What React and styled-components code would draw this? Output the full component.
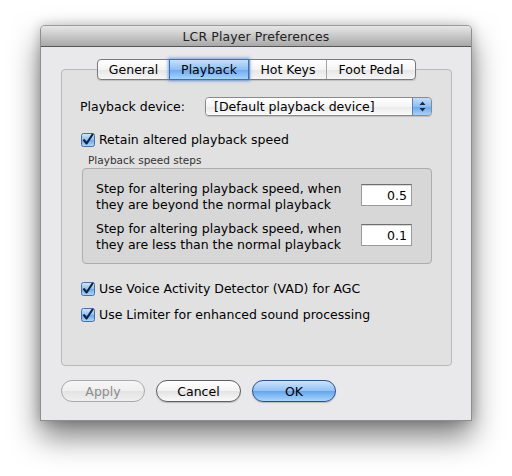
import React from "react";
import styled, { createGlobalStyle, css } from "styled-components";

const Global = createGlobalStyle`
  html, body { margin: 0; padding: 0; background: #ffffff; }
  body { font-family: "DejaVu Sans", "Noto Sans", sans-serif; font-size: 12px; color: #000; }
  * { box-sizing: border-box; }
`;

const Page = styled.div`
  width: 512px;
  height: 476px;
  padding: 25px 0 0 40px;
`;

const Window = styled.div`
  width: 432px;
  height: 396px;
  background: #e9e8ea;
  border: 1px solid #8e8e8e;
  border-top-color: #9a9a9a;
  border-radius: 5px 5px 0 0;
  box-shadow: 0 16px 30px rgba(0, 0, 0, 0.5), 0 0 12px rgba(0, 0, 0, 0.22);
  display: flex;
  flex-direction: column;
`;

const TitleBar = styled.div`
  height: 21px;
  flex: none;
  border-radius: 4px 4px 0 0;
  background: linear-gradient(#e7e7e7, #c8c8c8 50%, #a8a8a8);
  border-bottom: 1px solid #565656;
  display: flex;
  align-items: center;
  justify-content: center;
  font-size: 12.5px;
  color: #222;
  letter-spacing: 0.1px;
`;

const Body = styled.div`
  flex: 1;
  display: flex;
  flex-direction: column;
  padding: 12px 19px 0 20px;
`;

const TabStrip = styled.div`
  display: flex;
  justify-content: center;
  margin-bottom: -11px;
  position: relative;
  z-index: 1;
`;

const Segments = styled.div`
  display: flex;
  height: 21px;
  border: 1px solid #7a7a7a;
  border-radius: 4px;
  background: linear-gradient(#ffffff, #f4f4f4 50%, #e6e6e6 51%, #f6f6f6);
  box-shadow: 0 1px 1px rgba(0, 0, 0, 0.15);
`;

const Tab = styled.div`
  width: ${(p) => p.$w}px;
  display: flex;
  align-items: center;
  justify-content: center;
  font-size: 12.5px;
  border-left: 1px solid #a6a6a6;
  &:first-child { border-left: none; border-radius: 3px 0 0 3px; }
  &:last-child { border-radius: 0 3px 3px 0; }
  ${(p) =>
    p.$active &&
    css`
      background: linear-gradient(#c6e0fb, #8ec0f5 50%, #6ba9ee 51%, #a8d4fb);
      border: 1px solid #3f6fb7;
      margin: -1px 0;
      box-shadow: 0 0 3px 1px rgba(80, 140, 220, 0.75);
      position: relative;
      z-index: 1;
    `}
`;

const GroupBox = styled.div`
  height: 297px;
  background: #e1e1e2;
  border: 1px solid #b9b9b9;
  border-radius: 4px;
  padding: 27px 19px 0 18px;
  display: flex;
  flex-direction: column;
`;

const DeviceRow = styled.div`
  display: flex;
  align-items: center;
  justify-content: space-between;
  height: 19px;
`;

const Label = styled.span`
  font-size: 12.5px;
`;

const Popup = styled.div`
  width: 227px;
  height: 19px;
  border: 1px solid #8a8a8a;
  border-radius: 4px;
  display: flex;
  overflow: hidden;
  box-shadow: 0 1px 1px rgba(0, 0, 0, 0.15);
`;

const PopupText = styled.div`
  flex: 1;
  padding-left: 8px;
  display: flex;
  align-items: center;
  font-size: 12.5px;
  background: linear-gradient(#ffffff, #f5f5f5 50%, #e9e9e9 51%, #fbfbfb);
`;

const PopupArrows = styled.div`
  width: 19px;
  display: flex;
  align-items: center;
  justify-content: center;
  border-left: 1px solid #5b7fb5;
  background: linear-gradient(#c4defa, #8dbef3 50%, #6aa7ec 51%, #a5d2fb);
`;

const CheckRow = styled.div`
  display: flex;
  align-items: center;
  gap: 4px;
  margin-top: ${(p) => p.$mt}px;
  margin-left: 1px;
  font-size: 12.5px;
`;

const SmallLabel = styled.div`
  font-size: 10.5px;
  color: #333;
  margin: 7px 0 0 8px;
  height: 14px;
`;

const InnerBox = styled.div`
  margin: 0 0 0 2px;
  height: 96px;
  background: #d7d7d8;
  border: 1px solid #adadad;
  border-radius: 4px;
  padding: 12px 19px 0 13px;
  display: flex;
  flex-direction: column;
  gap: 8px;
`;

const StepRow = styled.div`
  display: flex;
  justify-content: space-between;
  align-items: flex-start;
`;

const StepText = styled.div`
  font-size: 12.5px;
  line-height: 16px;
`;

const NumField = styled.div`
  width: 51px;
  height: 22px;
  margin-top: 3px;
  background: #fff;
  border: 1px solid #9a9a9a;
  border-top-color: #6f6f6f;
  box-shadow: inset 0 1px 0 #d8d8d8;
  display: flex;
  align-items: center;
  justify-content: flex-end;
  padding-right: 4px;
  font-size: 12.5px;
`;

const ButtonRow = styled.div`
  display: flex;
  gap: 11px;
  padding: 14px 0 0 0;
`;

const Button = styled.div`
  width: ${(p) => p.$w}px;
  height: 22px;
  border-radius: 11px;
  display: flex;
  align-items: center;
  justify-content: center;
  font-size: 12.5px;
  border: 1px solid #5e5e5e;
  background: linear-gradient(#ffffff, #f3f3f3 50%, #e2e2e2 51%, #fafafa);
  box-shadow: 0 1px 1px rgba(0, 0, 0, 0.2);
  ${(p) =>
    p.$disabled &&
    css`
      color: #8c8c8c;
      border-color: #a9a9a9;
      background: linear-gradient(#f6f6f6, #efefef 50%, #e3e3e3 51%, #f0f0f0);
      box-shadow: none;
    `}
  ${(p) =>
    p.$primary &&
    css`
      border-color: #2d4f8f;
      background: linear-gradient(#cbe3fc, #92c2f5 50%, #65a4ec 51%, #a9d6fc);
    `}
`;

const CheckBox = () => (
  <svg width="14" height="14" viewBox="0 0 14 14">
    <defs>
      <linearGradient id="cbg" x1="0" y1="0" x2="0" y2="1">
        <stop offset="0" stopColor="#d3e7fb" />
        <stop offset="0.5" stopColor="#8fbff2" />
        <stop offset="0.51" stopColor="#6aa6ea" />
        <stop offset="1" stopColor="#b3dafc" />
      </linearGradient>
    </defs>
    <rect x="0.5" y="0.5" width="13" height="13" rx="2" fill="url(#cbg)" stroke="#4a6ea6" />
    <path d="M3 7.2 L5.6 10.5 L11.5 1.5" fill="none" stroke="#10213d" strokeWidth="2.1" strokeLinecap="round" strokeLinejoin="round" />
  </svg>
);

const Arrows = () => (
  <svg width="7" height="11" viewBox="0 0 7 11">
    <path d="M3.5 0.5 L6.5 4 L0.5 4 Z" fill="#1b2a40" />
    <path d="M3.5 10.5 L6.5 7 L0.5 7 Z" fill="#1b2a40" />
  </svg>
);

export default function App() {
  return (
    <>
      <Global />
      <Page>
        <Window>
          <TitleBar>LCR Player Preferences</TitleBar>
          <Body>
            <TabStrip>
              <Segments>
                <Tab $w={71}>General</Tab>
                <Tab $w={80} $active>Playback</Tab>
                <Tab $w={77}>Hot Keys</Tab>
                <Tab $w={89}>Foot Pedal</Tab>
              </Segments>
            </TabStrip>
            <GroupBox>
              <DeviceRow>
                <Label>Playback device:</Label>
                <Popup>
                  <PopupText>[Default playback device]</PopupText>
                  <PopupArrows>
                    <Arrows />
                  </PopupArrows>
                </Popup>
              </DeviceRow>
              <CheckRow $mt={16}>
                <CheckBox />
                <span>Retain altered playback speed</span>
              </CheckRow>
              <SmallLabel>Playback speed steps</SmallLabel>
              <InnerBox>
                <StepRow>
                  <StepText>
                    Step for altering playback speed, when
                    <br />
                    they are beyond the normal playback
                  </StepText>
                  <NumField>0.5</NumField>
                </StepRow>
                <StepRow>
                  <StepText>
                    Step for altering playback speed, when
                    <br />
                    they are less than the normal playback
                  </StepText>
                  <NumField>0.1</NumField>
                </StepRow>
              </InnerBox>
              <CheckRow $mt={17}>
                <CheckBox />
                <span>Use Voice Activity Detector (VAD) for AGC</span>
              </CheckRow>
              <CheckRow $mt={11}>
                <CheckBox />
                <span>Use Limiter for enhanced sound processing</span>
              </CheckRow>
            </GroupBox>
            <ButtonRow>
              <Button $w={84} $disabled>Apply</Button>
              <Button $w={85}>Cancel</Button>
              <Button $w={84} $primary>OK</Button>
            </ButtonRow>
          </Body>
        </Window>
      </Page>
    </>
  );
}
